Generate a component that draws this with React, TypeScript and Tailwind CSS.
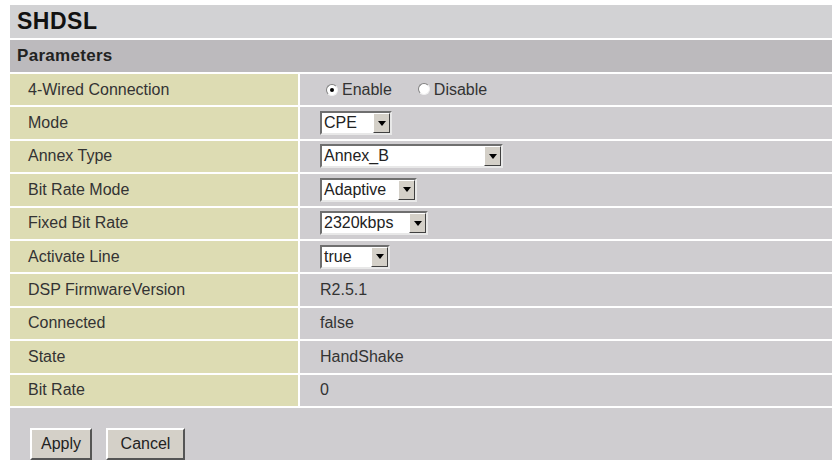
import React from 'react';

type Row = { label: string; value: React.ReactNode };

const Arrow: React.FC = () => (
  <span className="flex h-full w-[17px] items-center justify-center border border-t-white border-l-white border-r-[#404040] border-b-[#404040] bg-[#d4d0c8]">
    <svg width="8" height="5" viewBox="0 0 8 5">
      <path d="M0 0 H8 L4 5 Z" fill="#000" />
    </svg>
  </span>
);

const Select: React.FC<{ value: string; width: number }> = ({ value, width }) => (
  <div
    className="flex h-[24px] items-stretch border-2 border-t-[#6f6f6f] border-l-[#6f6f6f] border-r-[#e8e8e8] border-b-[#e8e8e8] bg-white"
    style={{ width }}
  >
    <span className="flex-1 pl-[2px] leading-[20px] text-[#222]">{value}</span>
    <Arrow />
  </div>
);

const Radio: React.FC<{ checked?: boolean }> = ({ checked }) => (
  <span className="relative inline-flex h-[12px] w-[12px] items-center justify-center rounded-full border border-t-[#808080] border-l-[#808080] border-r-[#f0f0f0] border-b-[#f0f0f0] bg-white">
    {checked && <span className="h-[4px] w-[4px] rounded-full bg-black" />}
  </span>
);

const rows: Row[] = [
  {
    label: '4-Wired Connection',
    value: (
      <div className="flex items-center pl-[6px]">
        <Radio checked />
        <span className="ml-[4px]">Enable</span>
        <span className="ml-[26px]">
          <Radio />
        </span>
        <span className="ml-[4px]">Disable</span>
      </div>
    ),
  },
  { label: 'Mode', value: <Select value="CPE" width={72} /> },
  { label: 'Annex Type', value: <Select value="Annex_B" width={183} /> },
  { label: 'Bit Rate Mode', value: <Select value="Adaptive" width={97} /> },
  { label: 'Fixed Bit Rate', value: <Select value="2320kbps" width={108} /> },
  { label: 'Activate Line', value: <Select value="true" width={70} /> },
  { label: 'DSP FirmwareVersion', value: 'R2.5.1' },
  { label: 'Connected', value: 'false' },
  { label: 'State', value: 'HandShake' },
  { label: 'Bit Rate', value: '0' },
];

const Button: React.FC<{ children: React.ReactNode; width: number }> = ({ children, width }) => (
  <button
    className="h-[32px] border-2 border-t-white border-l-white border-r-[#555] border-b-[#555] bg-[#d4d0c8] text-[16px] text-[#222]"
    style={{ width }}
  >
    {children}
  </button>
);

export default function App() {
  return (
    <div
      className="h-[468px] w-[837px] bg-white pl-[10px] pr-[5px] pt-[5px] text-[16px] text-[#333]"
      style={{ fontFamily: '"Liberation Sans", Arial, sans-serif' }}
    >
      <div className="flex h-[455px] flex-col overflow-hidden bg-[#cfcdd0]">
        <div className="flex h-[33px] shrink-0 items-center bg-[#d2d2d4] pl-[7px] text-[23px] font-bold tracking-[0.5px] text-[#111]">
          SHDSL
        </div>
        <div className="flex h-[34px] shrink-0 items-center border-t-2 border-white bg-[#bcbabd] pl-[7px] text-[17px] font-bold tracking-[0.3px] text-[#222]">
          Parameters
        </div>
        {rows.map((r) => (
          <div key={r.label} className="flex h-[33.4px] shrink-0 border-t-2 border-white">
            <div className="flex w-[288px] shrink-0 items-center bg-[#dddcb3] pl-[18px]">{r.label}</div>
            <div className="flex flex-1 items-center border-l-2 border-white pl-[20px]">{r.value}</div>
          </div>
        ))}
        <div className="flex gap-[14px] border-t-2 border-white pl-[20px] pt-[20px]">
          <Button width={62}>Apply</Button>
          <Button width={79}>Cancel</Button>
        </div>
      </div>
    </div>
  );
}
